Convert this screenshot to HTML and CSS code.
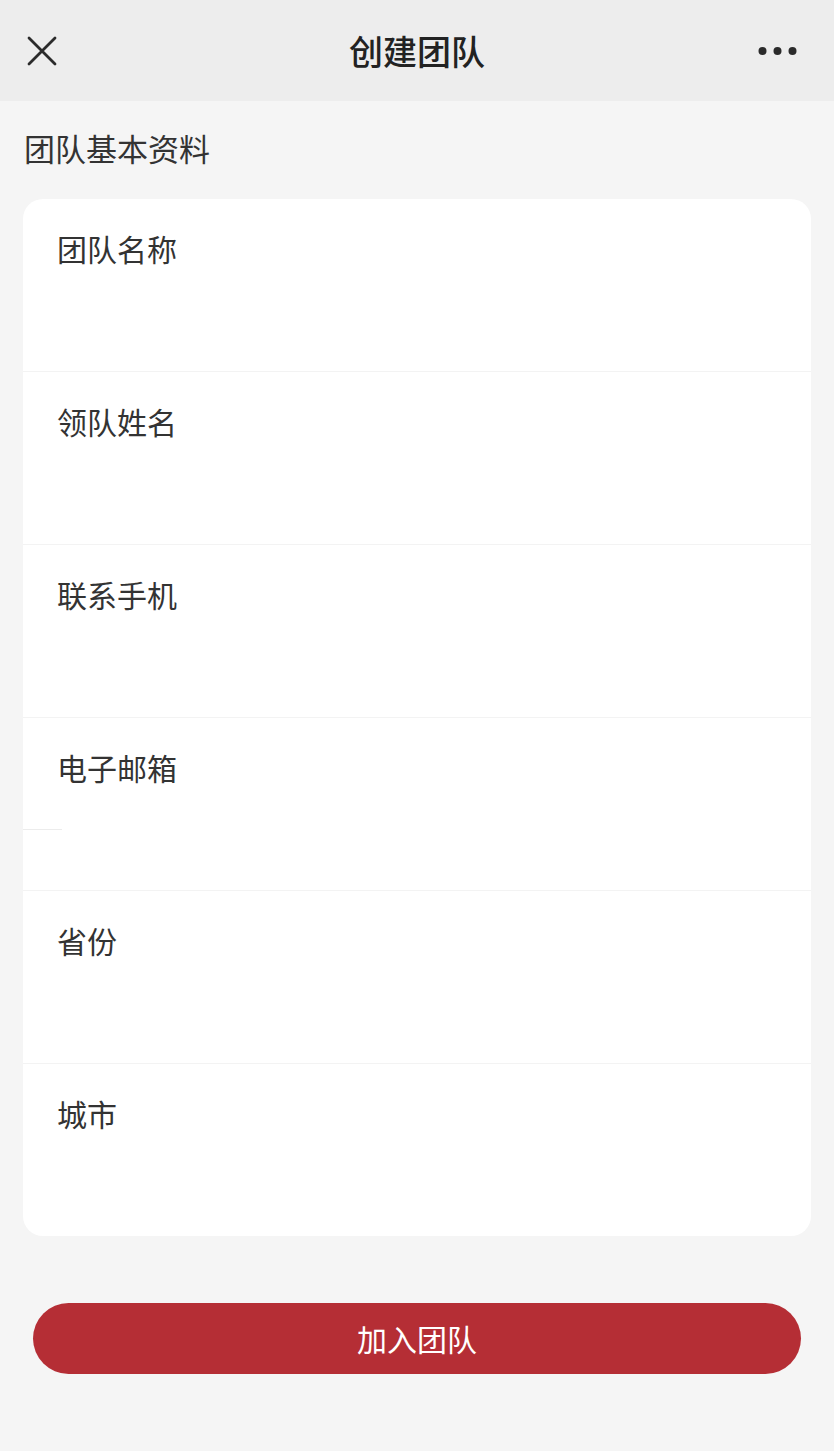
FILE: index.html
```html
<!DOCTYPE html>
<html lang="zh-CN">
<head>
<meta charset="utf-8">
<title>创建团队</title>
<link rel="stylesheet" href="styles.css">
</head>
<body>
<header class="nav">
  <span class="nav-close">
    <svg width="30" height="30" viewBox="0 0 30 30"><path d="M2 2 L28 28 M28 2 L2 28" stroke="#2b2b2b" stroke-width="2.8" stroke-linecap="round" fill="none"/></svg>
  </span>
  <h1 class="nav-title">创建团队</h1>
  <span class="nav-more">
    <svg width="40" height="10" viewBox="0 0 40 10"><circle cx="4.5" cy="5" r="4" fill="#2b2b2b"/><circle cx="19.5" cy="5" r="4" fill="#2b2b2b"/><circle cx="34.5" cy="5" r="4" fill="#2b2b2b"/></svg>
  </span>
</header>
<main class="page">
  <div class="section-title">团队基本资料</div>
  <div class="card">
    <div class="row"><div class="label">团队名称</div></div>
    <div class="row"><div class="label">领队姓名</div></div>
    <div class="row"><div class="label">联系手机</div></div>
    <div class="row"><div class="label">电子邮箱</div><div class="mark"></div></div>
    <div class="row"><div class="label">省份</div></div>
    <div class="row last"><div class="label">城市</div></div>
  </div>
  <div class="actions">
    <button class="btn">加入团队</button>
  </div>
</main>
</body>
</html>
```
FILE: styles.css
```css
* { box-sizing: border-box; }
html, body {
  margin: 0;
  padding: 0;
  background: #f5f5f5;
  font-family: "Noto Sans CJK SC", "Noto Sans", sans-serif;
  color: #333;
}
.nav {
  height: 101px;
  background: #ededed;
  display: flex;
  align-items: center;
  justify-content: space-between;
  padding: 0 36px 0 27px;
  position: relative;
}
.nav-close { display: flex; width: 30px; height: 30px; }
.nav-more { display: flex; }
.nav-title {
  margin: 0;
  font-size: 34px;
  font-weight: 500;
  color: #222;
  position: absolute;
  left: 0;
  right: 0;
  text-align: center;
  line-height: 101px;
  top: 0;
  pointer-events: none;
}
.page { padding: 0 23px; }
.section-title {
  height: 98px;
  line-height: 94px;
  font-size: 31px;
  color: #333;
  padding-left: 1px;
}
.card {
  background: #fff;
  border-radius: 20px;
  overflow: hidden;
}
.row {
  height: 173px;
  padding: 29px 34px 0;
  border-bottom: 1px solid #f3f3f3;
}
.row.last { border-bottom: none; height: 172px; }
.label {
  font-size: 30px;
  line-height: 40px;
  color: #333;
}
.mark {
  width: 39px;
  height: 1px;
  background: #ececec;
  margin: 42px 0 0 -34px;
}
.actions {
  padding: 67px 10px 0;
}
.btn {
  display: block;
  width: 100%;
  height: 71px;
  border: none;
  border-radius: 36px;
  background: #b52e35;
  color: #fff;
  font-family: "Noto Sans CJK SC", "Noto Sans", sans-serif;
  font-size: 30px;
  line-height: 71px;
  padding: 0;
}
```
